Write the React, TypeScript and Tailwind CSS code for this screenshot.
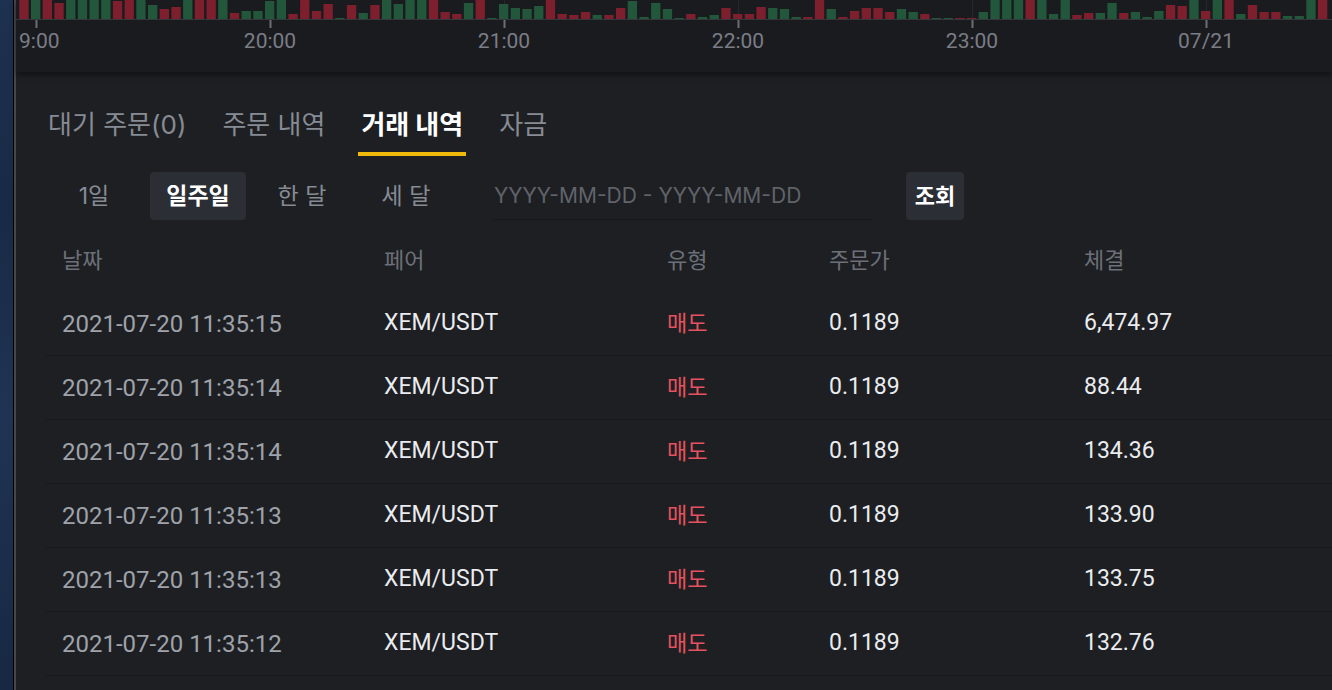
import { useState } from "react"

const BAR_DATA =
  "0r 0g 0r 8r 0g 0g 0g 0g 3r 0r 0g 14g 28r 21r 0g 0r 0r 0g 38r 34g 34g 4g 0g 41r 0r 34r 13r 53g 14r 39g 14r 0g 13g 0g 0g 0r 37r " +
  "42r 10g 0r 53g 13g 23g 28g 18g 0r 42r 44r 36r 46g 46r 24r 4g 50g 9g 27g 54g 42r 51g 46g 24r 41r 41r 20r 24g 28g 50g 51r 0r 27g 51r 34r 23r 23r 36r " +
  "27g 36g 42r 53g 53g 53r 53r 35g 0g 0g 0g 0r 0g 42g 0g 45r 39r 39g 9g 39r 36g 52g 34g 15r 19r 0g 34r 0g 0r 41g 14r 35r 36r 47g 48g 0g 0r"

const bars = BAR_DATA.split(" ").map((s) => {
  const top = Number.parseInt(s, 10)
  return { h: Math.max(1, Math.round((57 - top) / 3)), up: s.endsWith("g") }
})

// x is relative to the panel, which starts at page x 16
const ticks = [20, 254, 488, 722, 956, 1190]
const labels = [
  { x: 254, label: "20:00" },
  { x: 488, label: "21:00" },
  { x: 722, label: "22:00" },
  { x: 956, label: "23:00" },
  { x: 1190, label: "07/21" },
]

const rows = [
  { date: "2021-07-20 11:35:15", filled: "6,474.97" },
  { date: "2021-07-20 11:35:14", filled: "88.44" },
  { date: "2021-07-20 11:35:14", filled: "134.36" },
  { date: "2021-07-20 11:35:13", filled: "133.90" },
  { date: "2021-07-20 11:35:13", filled: "133.75" },
  { date: "2021-07-20 11:35:12", filled: "132.76" },
]

const tabs = ["대기 주문(0)", "주문 내역", "거래 내역", "자금"]
const periods = ["1일", "일주일", "한 달", "세 달"]

const kr = "font-['Inter','Noto_Sans_CJK_KR',sans-serif]"
const num = "font-['Roboto','Noto_Sans_CJK_KR',sans-serif]"

function VolumeChart() {
  return (
    <div className="relative h-[72px] bg-[#1a1b1f] shadow-[0_3px_6px_rgba(0,0,0,0.45)] z-10 overflow-hidden">
      <svg width="1316" height="30" className="absolute left-0 top-0">
        {ticks.map((x) => (
          <rect key={x} x={x} y={0} width={1} height={19} fill="#25272c" />
        ))}
        {bars.map((b, i) => (
          <rect
            key={i}
            x={3.3 + i * 11.7}
            y={19 - b.h}
            width={9.3}
            height={b.h}
            fill={b.up ? "#22573b" : "#7e1f2e"}
          />
        ))}
        <rect x={0} y={19} width={1316} height={1} fill="#35373d" />
        {ticks.map((x) => (
          <rect key={x} x={x - 0.5} y={20} width={2} height={8} fill="#6b6e75" />
        ))}
      </svg>
      <span className={`absolute left-[3px] top-[30px] text-[21px] leading-[22px] text-[#7a7d85] ${num}`}>
        9:00
      </span>
      {labels.map((t) => (
        <span
          key={t.x}
          className={`absolute top-[30px] w-[80px] -ml-[40px] text-center text-[21px] leading-[22px] text-[#7a7d85] ${num}`}
          style={{ left: t.x }}
        >
          {t.label}
        </span>
      ))}
    </div>
  )
}

export default function App() {
  const [tab, setTab] = useState(2)
  const [period, setPeriod] = useState(1)

  return (
    <div className="flex h-[690px] w-[1332px] overflow-hidden bg-[#1e1f23]">
      <div className="w-[13px] shrink-0 bg-[linear-gradient(180deg,#1d3150,#172a45_30%,#1f3454_60%,#162842)]" />
      <div className="w-px shrink-0 bg-black" />
      <div className="w-[2px] shrink-0 bg-[#45474b]" />
      <div className="flex-1 flex flex-col min-w-0">
        <VolumeChart />

        <div className="flex flex-col pt-[20px]">
          <div className="flex gap-[30px] pl-[29px]">
            {tabs.map((t, i) => (
              <button
                key={t}
                type="button"
                onClick={() => setTab(i)}
                className={`relative h-[64px] px-[3px] flex items-center text-[26px] ${kr} ${
                  i === tab ? "text-white font-bold" : "text-[#868b94]"
                }`}
              >
                {t}
                {i === tab && (
                  <span className="absolute left-0 right-0 bottom-0 h-1 bg-[#f0b90b]" />
                )}
              </button>
            ))}
          </div>

          <div className="flex items-center mt-4 pl-[30px]">
            <div className="flex gap-2">
              {periods.map((p, i) => (
                <button
                  key={p}
                  type="button"
                  onClick={() => setPeriod(i)}
                  className={`w-[96px] h-[48px] rounded text-[23px] ${kr} ${
                    i === period
                      ? "bg-[#2b2e35] text-white font-semibold"
                      : "text-[#868b94]"
                  }`}
                >
                  {p}
                </button>
              ))}
            </div>
            <div className="ml-[40px] w-[379px] h-[48px] flex items-center border-b border-[#16171a]">
              <input
                placeholder="YYYY-MM-DD - YYYY-MM-DD"
                className="w-full bg-transparent outline-none text-[21px] text-white placeholder:text-[#60636a] font-['Inter',sans-serif]"
              />
            </div>
            <button
              type="button"
              className={`ml-[33px] w-[58px] h-[48px] rounded bg-[#2b2e35] text-white font-bold text-[22px] ${kr}`}
            >
              조회
            </button>
          </div>

          <div className="mt-2 ml-[30px]">
            <div
              className={`grid grid-cols-[322px_283px_162px_255px_1fr] h-[64px] items-center text-[22px] text-[#6c7078] ${kr}`}
            >
              <div className="px-4">날짜</div>
              <div className="px-4">페어</div>
              <div className="px-4">유형</div>
              <div className="px-4">주문가</div>
              <div className="px-4">체결</div>
            </div>
            {rows.map((r, i) => (
              <div
                key={i}
                className="grid grid-cols-[322px_283px_162px_255px_1fr] h-[64px] items-center border-b border-[#18191d]"
              >
                <div className={`px-4 text-[24px] text-[#9ea2aa] ${num}`}>{r.date}</div>
                <div className={`px-4 text-[23px] text-[#eaecef] ${num}`}>XEM/USDT</div>
                <div className={`px-4 text-[22px] text-[#e5525f] ${kr}`}>매도</div>
                <div className={`px-4 text-[23px] text-[#eaecef] ${num}`}>0.1189</div>
                <div className={`px-4 text-[23px] text-[#eaecef] ${num}`}>{r.filled}</div>
              </div>
            ))}
          </div>
        </div>
      </div>
    </div>
  )
}
